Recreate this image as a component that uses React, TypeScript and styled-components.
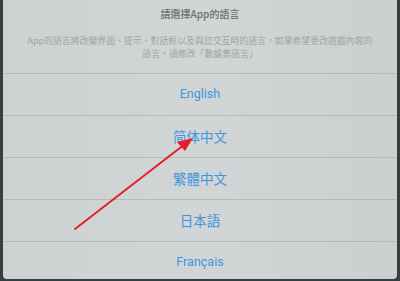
import React from "react";
import styled, { createGlobalStyle } from "styled-components";

const GlobalStyle = createGlobalStyle`
  html, body {
    margin: 0;
    padding: 0;
    background: #34403f;
    overflow: hidden;
  }
  body {
    font-family: Roboto, "Noto Sans CJK TC", "Noto Sans", sans-serif;
  }
`;

const Screen = styled.div`
  position: relative;
  width: 400px;
  height: 281px;
  padding: 0 3px 2px 3px;
  box-sizing: border-box;
`;

const Dialog = styled.div`
  height: 100%;
  background: linear-gradient(90deg, #cdd1d1 0%, #d1d5d5 50%, #cbcfcf 100%);
  border-radius: 0 0 4px 4px;
  overflow: hidden;
  display: flex;
  flex-direction: column;
`;

const Header = styled.div`
  height: 73px;
  flex: none;
  box-sizing: border-box;
  padding: 7px 0 0 0;
  text-align: center;
`;

const Title = styled.div`
  font-family: "Noto Sans CJK TC", sans-serif;
  font-size: 10px;
  line-height: 14px;
  font-weight: 500;
  color: #6c7070;
`;

const Message = styled.div`
  margin-top: 13px;
  font-family: "Noto Sans CJK TC", sans-serif;
  font-size: 8.9px;
  line-height: 13px;
  color: #a0a4a4;
  white-space: nowrap;
`;

const Option = styled.div<{ $cjk?: boolean }>`
  height: 42px;
  flex: none;
  border-top: 1px solid #b5b9b9;
  display: flex;
  align-items: center;
  justify-content: center;
  color: #3f96de;
  font-family: ${(p) =>
    p.$cjk
      ? `"Noto Sans CJK SC", "Noto Sans CJK TC", sans-serif`
      : `Roboto, "Noto Sans", sans-serif`};
  font-size: ${(p) => (p.$cjk ? "13.5px" : "12.5px")};
  padding-bottom: 2px;
  box-sizing: border-box;
`;

const Arrow = styled.svg`
  position: absolute;
  left: 0;
  top: 0;
  pointer-events: none;
`;

const languages = [
  { label: "English" },
  { label: "简体中文", cjk: true },
  { label: "繁體中文", cjk: true },
  { label: "日本語", cjk: true },
  { label: "Français" },
];

export default function App() {
  return (
    <>
      <GlobalStyle />
      <Screen>
        <Dialog>
          <Header>
            <Title>請選擇App的語言</Title>
            <Message>
              App的語言將改變界面、提示、對話框以及與您交互時的語言，如果希望更改遊戲內容的
              <br />
              語言，請修改「數據集語言」
            </Message>
          </Header>
          {languages.map((lang) => (
            <Option key={lang.label} $cjk={lang.cjk}>
              {lang.label}
            </Option>
          ))}
        </Dialog>
        <Arrow width="400" height="281" viewBox="0 0 400 281">
          <line
            x1="75"
            y1="229"
            x2="185"
            y2="144"
            stroke="#e2202c"
            strokeWidth="2"
            strokeLinecap="round"
          />
          <polygon points="193,138 177,142 185,151" fill="#e2202c" />
        </Arrow>
      </Screen>
    </>
  );
}
